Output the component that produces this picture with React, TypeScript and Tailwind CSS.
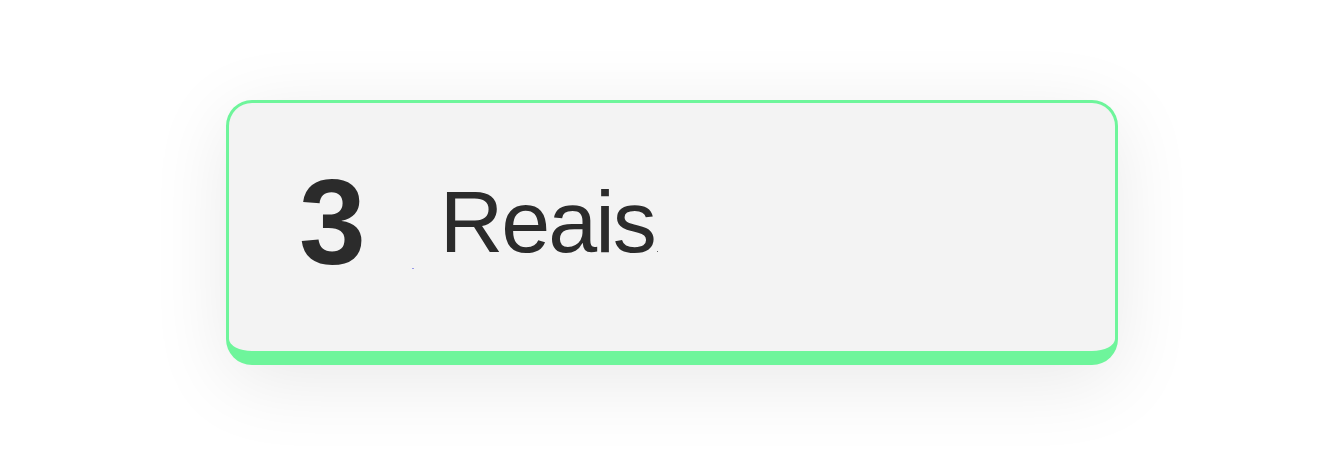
import React from "react";

export default function App() {
  return (
    <div className="w-full h-[454px] bg-white flex justify-center pt-[100px]" style={{ fontFamily: '"Liberation Sans", Arial, sans-serif' }}>
      <div className="relative w-[892px] h-[265px] rounded-[26px] border-[3px] border-b-[14px] border-[#6ef59b] bg-[#f3f3f3] shadow-[0_16px_80px_rgba(0,0,0,0.09)] flex items-center pl-[70px] pb-[10px]">
        <span className="text-[120px] font-bold leading-none text-[#2b2b2b]">3</span>
        <span className="relative ml-[74px] text-[88px] leading-none tracking-[-2px] text-[#2b2b2b]">
          Reais
          <span className="absolute right-[-3px] bottom-[14px] w-[1px] h-[1px] bg-[#666]" />
        </span>
        <span className="absolute left-[183px] top-[165px] w-[2px] h-[1px] bg-[#9a9ae8]" />
      </div>
    </div>
  );
}
